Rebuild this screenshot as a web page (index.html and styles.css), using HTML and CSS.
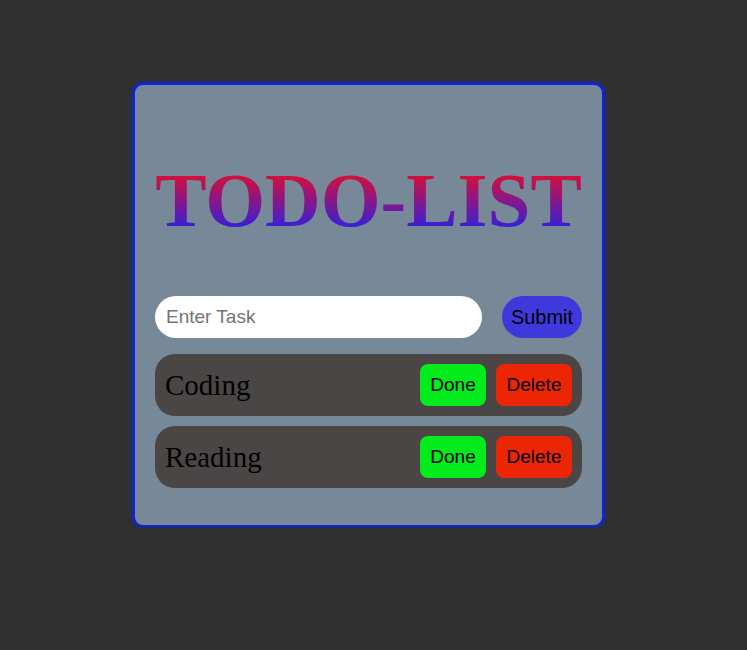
FILE: index.html
```html
<!DOCTYPE html>
<html>
<head>
<meta charset="utf-8">
<title>Todo List</title>
<link rel="stylesheet" href="styles.css">
</head>
<body>
<div class="card">
  <h1 class="title">TODO-LIST</h1>
  <form class="entry">
    <input class="task-input" type="text" placeholder="Enter Task">
    <button class="submit" type="button">Submit</button>
  </form>
  <ul class="list">
    <li class="item">
      <span class="item-name">Coding</span>
      <div class="actions">
        <button class="done" type="button">Done</button>
        <button class="delete" type="button">Delete</button>
      </div>
    </li>
    <li class="item">
      <span class="item-name">Reading</span>
      <div class="actions">
        <button class="done" type="button">Done</button>
        <button class="delete" type="button">Delete</button>
      </div>
    </li>
  </ul>
</div>
</body>
</html>
```
FILE: styles.css
```css
html, body {
  margin: 0;
  padding: 0;
}
body {
  background: #303030;
  font-family: "Liberation Serif", "Times New Roman", serif;
  display: flex;
  justify-content: center;
  padding-top: 83px;
  padding-right: 10px;
}
.card {
  width: 427px;
  padding: 0 20px 37px;
  background: #778899;
  border: 2px solid #0a22f0;
  border-radius: 10px;
  box-shadow: 0 0 4px #0a22f0;
}
.title {
  margin: 77px 0 0;
  font-size: 77px;
  line-height: 77px;
  height: 77px;
  font-weight: bold;
  text-align: center;
  white-space: nowrap;
  background: linear-gradient(to bottom, #d40f3c 18%, #3d1fd0 82%);
  -webkit-background-clip: text;
  background-clip: text;
  color: transparent;
}
.entry {
  display: flex;
  gap: 20px;
  margin: 57px 0 16px;
}
.task-input {
  flex: 1;
  height: 42px;
  box-sizing: border-box;
  border: none;
  border-radius: 21px;
  padding: 0 11px;
  font-family: "Liberation Sans", Arial, sans-serif;
  font-size: 19px;
  color: #000;
  background: #fff;
  outline: none;
}
.task-input::placeholder {
  color: #757575;
}
.submit {
  width: 80px;
  height: 42px;
  border: none;
  border-radius: 21px;
  background: #3f39dc;
  color: #000;
  font-family: "Liberation Sans", Arial, sans-serif;
  font-size: 20px;
  padding: 0;
}
.list {
  list-style: none;
  margin: 0;
  padding: 0;
  display: flex;
  flex-direction: column;
  gap: 10px;
}
.item {
  height: 62px;
  box-sizing: border-box;
  background: #4a4646;
  border-radius: 20px;
  display: flex;
  align-items: center;
  justify-content: space-between;
  padding: 0 10px;
}
.item-name {
  font-size: 29px;
  color: #000;
}
.actions {
  display: flex;
  gap: 10px;
}
.done, .delete {
  height: 42px;
  border: none;
  border-radius: 8px;
  font-family: "Liberation Sans", Arial, sans-serif;
  font-size: 19px;
  color: #000;
  padding: 0;
}
.done {
  width: 66px;
  background: #03eb1b;
}
.delete {
  width: 76px;
  background: #ec2505;
}
```
